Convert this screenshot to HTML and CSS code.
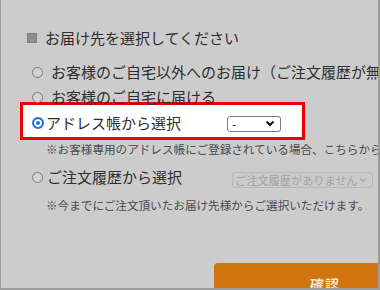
FILE: index.html
```html
<!DOCTYPE html>
<html lang="ja">
<head>
<meta charset="utf-8">
<link rel="stylesheet" href="styles.css">
</head>
<body>
<div class="frame">
  <div class="heading"><span class="sq"></span>お届け先を選択してください</div>
  <div class="opt opt1"><span class="radio"></span>お客様のご自宅以外へのお届け（ご注文履歴が無い場合）</div>
  <div class="opt opt2"><span class="radio"></span>お客様のご自宅に届ける</div>
  <div class="spot">
    <span class="radio checked"></span>
    <span class="spot-label">アドレス帳から選択</span>
    <span class="sel">
      <span class="sel-text">-</span>
      <svg class="chev" width="10" height="7" viewBox="0 0 10 7"><path d="M1.5 1.5 L5 5 L8.5 1.5" fill="none" stroke="#111" stroke-width="2"/></svg>
    </span>
  </div>
  <div class="note note1">※お客様専用のアドレス帳にご登録されている場合、こちらからご選択いただけます。</div>
  <div class="opt opt4">
    <span class="radio"></span><span class="opt4-label">ご注文履歴から選択</span>
    <span class="sel sel-dis">
      <span class="sel-text">ご注文履歴がありません</span>
      <svg class="chev" width="8" height="6" viewBox="0 0 10 7"><path d="M1.5 1.5 L5 5 L8.5 1.5" fill="none" stroke="#a6a6a6" stroke-width="1.8"/></svg>
    </span>
  </div>
  <div class="note note2">※今までにご注文頂いたお届け先様からご選択いただけます。</div>
  <div class="btn">確認</div>
</div>
</body>
</html>
```

FILE: styles.css
```css
html, body {
  margin: 0;
  padding: 0;
  background: #cccccc;
}
.frame {
  width: 380px;
  height: 290px;
  box-sizing: border-box;
  border-left: 1px solid #9c9c9c;
  border-right: 2px solid #9c9c9c;
  border-bottom: 2px solid #9c9c9c;
  background: #cccccc;
  overflow: hidden;
  padding-top: 28px;
  font-family: "Noto Sans CJK JP", "Noto Sans", sans-serif;
  color: #2e2e2e;
  white-space: nowrap;
}
.heading {
  height: 20px;
  line-height: 20px;
  font-size: 15px;
  margin-left: 26px;
  display: flex;
  align-items: center;
}
.sq {
  width: 8px;
  height: 8px;
  background: #8f8f8f;
  border: 1px solid #7d7d7d;
  margin-right: 8px;
}
.opt {
  height: 16px;
  line-height: 16px;
  font-size: 15px;
  display: flex;
  align-items: center;
}
.opt1 {
  margin-top: 16px;
  margin-left: 31px;
}
.opt2 {
  margin-top: 9px;
  margin-left: 31px;
}
.radio {
  width: 9px;
  height: 9px;
  border: 1px solid #7a7a7a;
  border-radius: 50%;
  background: #d4d4d4;
  flex: none;
}
.opt1 .radio, .opt2 .radio {
  margin-right: 8px;
}
.spot {
  margin-top: -3px;
  margin-left: 19px;
  width: 285px;
  height: 38px;
  box-sizing: border-box;
  border: 3px solid #ee0000;
  background: #ffffff;
  display: flex;
  align-items: center;
  padding-left: 9px;
  padding-top: 3px;
  font-size: 15px;
  color: #2e2e2e;
}
.radio.checked {
  width: 8px;
  height: 8px;
  border: 2px solid #1a73e8;
  background: #1a73e8;
  box-shadow: inset 0 0 0 2px #ffffff;
  margin-right: 2px;
}
.spot-label {
  line-height: 20px;
}
.sel {
  display: flex;
  align-items: center;
  justify-content: space-between;
  box-sizing: border-box;
  height: 16px;
  border: 1px solid #7c7c7c;
  border-radius: 3px;
  background: #ffffff;
  font-size: 12px;
  line-height: 14px;
  padding: 0 5px 0 4px;
  flex: none;
}
.chev {
  flex: none;
}
.spot .sel {
  width: 54px;
  margin-left: 46px;
  margin-top: 2px;
}
.sel-text {
  color: #222;
}
.note {
  font-size: 11.6px;
  line-height: 16px;
  height: 16px;
  margin-left: 45px;
  color: #4a4a4a;
}
.note1 {
  margin-top: 1px;
}
.opt4 {
  margin-top: 12px;
  margin-left: 31px;
}
.opt4 .radio {
  margin-right: 4px;
}
.opt4-label {
  line-height: 16px;
}
.sel-dis {
  width: 141px;
  height: 16px;
  margin-left: 50px;
  margin-top: 5px;
  background: #cbcbcb;
  border-color: #b9b9b9;
  font-size: 11.2px;
  padding: 0 5px 0 2px;
}
.sel-dis .sel-text {
  color: #a3a3a3;
}
.note2 {
  margin-top: 12px;
}
.btn {
  margin-top: 50px;
  margin-left: 213px;
  width: 222px;
  height: 40px;
  box-sizing: border-box;
  background: #d0740f;
  border-radius: 4px;
  color: #f3e3d3;
  font-size: 14px;
  font-weight: bold;
  line-height: 20px;
  padding-top: 11px;
  text-align: center;
  letter-spacing: 1px;
}
```
